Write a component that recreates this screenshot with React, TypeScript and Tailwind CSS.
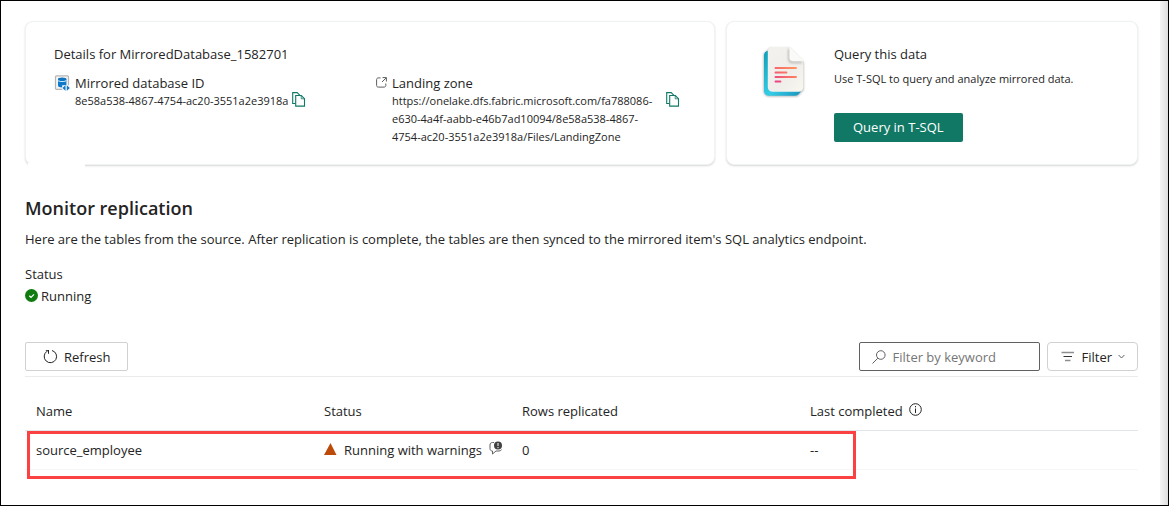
import type { ReactNode } from "react";

function DatabaseIcon() {
  return (
    <svg className="h-4 w-4 shrink-0" viewBox="0 0 16 16" aria-hidden="true">
      <rect x="1.500" y="0.8" width="13" height="13.6" rx="1" fill="#f4f4f4" stroke="#b5b5b5" strokeWidth="1.2" />
      <path d="M4 4v6.800c0 1 1.800 1.700 4.200 1.700s4.200-.7 4.200-1.700V4z" fill="#0f7ac8" />
      <ellipse cx="8.200" cy="4" rx="4.200" ry="1.500" fill="#1173bd" />
      <path d="M4.200 5.700c2 1 6 1 8 0" stroke="#d9f1ff" strokeWidth="1.200" fill="none" />
      <path d="M8.200 10.200H16v5.600H8.200z" fill="#f6f9fb" />
      <path d="M11.500 10.200v5.600L8.500 13zM12.800 10.200v5.600l3-2.800z" fill="#0f78c8" />
    </svg>
  );
}

function OpenIcon() {
  return (
    <svg className="h-[11px] w-[11px] shrink-0" viewBox="0 0 11 11" fill="none" stroke="#5f5f5f" aria-hidden="true">
      <path d="M4.500.9H2.2C1.300.9.6 1.600.6 2.500v6c0 .9.700 1.600 1.600 1.600h6c.9 0 1.600-.7 1.600-1.600V6.500" />
      <path d="M6.500.6h3.900v3.900M10.200.8 6 5" />
    </svg>
  );
}

function CopyIcon() {
  return (
    <svg className="h-[15px] w-[14px]" viewBox="0 0 14 15" fill="none" stroke="#117865" strokeWidth="1.1" aria-hidden="true">
      <path d="M3.500 11.500H.7V.6h4.500l2.500 2.500" />
      <path d="M3.700 3.500h5.600l3.200 3.200v7.400H3.700z" />
      <path d="M9.200 3.600v3.200h3.200" strokeWidth="0.8" />
    </svg>
  );
}

function CopyButton({ label }: { label: string }) {
  return (
    <button type="button" aria-label={label} className="mt-px h-[15px] w-[14px] shrink-0">
      <CopyIcon />
    </button>
  );
}

function DocumentArt() {
  return (
    <svg className="h-[56px] w-[46px] shrink-0" viewBox="0 0 46 56" aria-hidden="true">
      <defs>
        <linearGradient id="teal" x1="0" y1="0" x2="1" y2="1">
          <stop offset="0" stopColor="#0f9fb8" />
          <stop offset="0.55" stopColor="#35cde6" />
          <stop offset="1" stopColor="#1a93bd" />
        </linearGradient>
        <linearGradient id="paper" x1="0" y1="0" x2="1" y2="1">
          <stop offset="0" stopColor="#f3f2ef" />
          <stop offset="0.6" stopColor="#efeeea" />
          <stop offset="1" stopColor="#f8f7ef" />
        </linearGradient>
        <linearGradient id="rule" gradientUnits="userSpaceOnUse" x1="14" y1="40" x2="30" y2="22">
          <stop offset="0" stopColor="#e8368f" />
          <stop offset="0.5" stopColor="#f7686b" />
          <stop offset="1" stopColor="#ff8f62" />
        </linearGradient>
        <filter id="soft" x="-20%" y="-20%" width="140%" height="140%">
          <feGaussianBlur stdDeviation="1.1" />
        </filter>
      </defs>
      <path d="M9 4h19.500L42.500 18v28l-6 6.500H9c-4 0-6.500-2-6.500-6V10z" fill="#000" opacity="0.3" filter="url(#soft)" />
      <path d="M7 7h26v40h7c-1.500 3.200-3.500 4.800-6.500 4.800H8.500c-3.500 0-5.500-2-5.500-5.300V11.500C3 9 4.500 7 7 7z" fill="url(#teal)" />
      <path d="M11.500 3h17L42.300 16.500v26.200c0 3.300-1.800 5-5 5H12c-3.300 0-5.200-1.800-5.200-5V7.700C6.800 4.700 8.500 3 11.500 3z" fill="url(#paper)" />
      <path d="M28 5v9.500c0 2.600 1.300 3.800 3.800 3.800H41" fill="none" stroke="#8f8f8f" strokeWidth="1.800" opacity="0.6" filter="url(#soft)" />
      <path d="M28.500 3 42.300 16.500v.6H32c-2.400 0-3.500-1.100-3.500-3.500z" fill="#fafaf9" />
      <path d="M14.500 24h20.500M14.500 28.500h11M14.500 33h20.500M14.500 37.500h5" stroke="url(#rule)" strokeWidth="1.900" strokeLinecap="round" />
    </svg>
  );
}

function Card({ className, children }: { className: string; children: ReactNode }) {
  return (
    <section className={`rounded-lg border border-[#f0f3f3] bg-white shadow-[0_1px_2px_rgba(0,0,0,0.16)] ${className}`}>
      {children}
    </section>
  );
}

const headClass = "p-0 pl-[11px] text-left align-middle font-normal";
const cellClass = "p-0 pl-[11px] align-middle";

export default function App() {
  return (
    <main className="min-h-screen border border-black bg-white font-['Open_Sans','Noto_Sans',sans-serif] text-[13px] leading-5 text-[#242424]">
      <div className="flex min-h-[504px]">
        <div className="min-w-0 flex-1 pt-5 pr-[22px] pb-6 pl-6">
          <div className="grid grid-cols-[690fr_412fr] gap-[11px]">
            <div className="relative flex">
              <Card className="flex-1 px-7 pt-[22px] pb-[18px]">
                <h2>Details for MirroredDatabase_1582701</h2>
                <div className="mt-[9px] grid grid-cols-[322fr_310fr]">
                  <div className="flex items-start gap-[5px]">
                    <div className="pt-[2px]"><DatabaseIcon /></div>
                    <div>
                      <h3>Mirrored database ID</h3>
                      <div className="-mt-px flex items-start gap-1 text-[11px] leading-[18px]">
                        <p>8e58a538-4867-4754-ac20-3551a2e3918a</p>
                        <div className="-mt-px"><CopyButton label="Copy mirrored database ID" /></div>
                      </div>
                    </div>
                  </div>
                  <div className="flex items-start gap-[5px]">
                    <div className="pt-1"><OpenIcon /></div>
                    <div>
                      <h3>Landing zone</h3>
                      <div className="-mt-px flex items-start text-[11px] leading-[18px]">
                        <p className="w-[274px]">
                          https://onelake.dfs.fabric.microsoft.com/fa788086-
                          <br />
                          e630-4a4f-aabb-e46b7ad10094/8e58a538-4867-
                          <br />
                          4754-ac20-3551a2e3918a/Files/LandingZone
                        </p>
                        <div className="-mt-px"><CopyButton label="Copy landing zone" /></div>
                      </div>
                    </div>
                  </div>
                </div>
              </Card>
              <div className="absolute -bottom-1 left-[3px] h-[6px] w-[57px] bg-white" />
            </div>
            <Card className="flex gap-[27px] pt-[22px] pb-[22px] pl-[34px]">
              <DocumentArt />
              <div>
                <h2>Query this data</h2>
                <p className="mt-[5px] text-[11px] leading-5">Use T-SQL to query and analyze mirrored data.</p>
                <button type="button" className="mt-6 h-[29px] rounded-[2px] bg-[#117865] px-[19px] pb-[2px] text-white">
                  Query in T-SQL
                </button>
              </div>
            </Card>
          </div>

          <h1 className="mt-[31px] text-lg leading-6 font-semibold">Monitor replication</h1>
          <p className="mt-[9px]">
            Here are the tables from the source. After replication is complete, the tables are then synced to the
            mirrored item's SQL analytics endpoint.
          </p>
          <p className="mt-[15px]">Status</p>
          <p className="mt-[2px] flex items-center gap-[2px]">
            <svg className="h-[14px] w-[14px]" viewBox="0 0 14 14" aria-hidden="true">
              <circle cx="6.500" cy="6.500" r="6.500" fill="#107c10" />
              <path d="m4.300 6.700 1.700 1.600 3-3" fill="none" stroke="#fff" strokeWidth="1.200" />
            </svg>
            Running
          </p>

          <div className="mt-9 flex items-center gap-[7px] border-b border-[#ebebeb] pb-[5px]">
            <button type="button" className="mr-auto flex h-[29px] items-center gap-[6px] rounded-[2px] border border-[#d1d1d1] px-[17px]">
              <svg className="h-[15px] w-[15px]" viewBox="0 0 15 15" fill="none" stroke="#242424" aria-hidden="true">
                <path d="M9 1.500a6.200 6.200 0 1 1-5 .8" />
                <path d="M2.800 1.700h3.200M5.500 1.200v3.600" />
              </svg>
              Refresh
            </button>
            <label className="flex h-[29px] w-[181px] items-center gap-[6px] rounded-[2px] border border-[#616161] px-3">
              <svg className="h-[14px] w-[14px] shrink-0" viewBox="0 0 14 14" fill="none" stroke="#616161" aria-hidden="true">
                <circle cx="8.800" cy="5" r="4.300" />
                <path d="M5.800 8.200.500 13.500" />
              </svg>
              <input type="text" aria-label="Filter by keyword" placeholder="Filter by keyword" className="min-w-0 flex-1 outline-none placeholder:text-[#767676]" />
            </label>
            <button type="button" className="flex h-[29px] items-center gap-[6px] rounded-[4px] border border-[#d1d1d1] pr-3 pl-[13px]">
              <svg className="h-[13px] w-[14px]" viewBox="0 0 14 13" fill="none" aria-hidden="true">
                <path d="M.5 2.500h12.500M4 10.500h5.500" stroke="#8e8e8e" strokeWidth="1.600" />
                <path d="M2.500 6.500h8.500" stroke="#333" />
              </svg>
              Filter
              <svg className="h-[7px] w-[7px]" viewBox="0 0 7 7" fill="none" stroke="#616161" aria-hidden="true">
                <path d="m.6 2 2.900 3 2.900-3" />
              </svg>
            </button>
          </div>

          <div className="relative mt-4">
            <table className="w-full table-fixed border-collapse">
              <colgroup>
                <col className="w-[288px]" />
                <col className="w-[198px]" />
                <col className="w-[288px]" />
                <col />
              </colgroup>
              <thead>
                <tr className="h-[37px] border-b border-[#e3e6e8]">
                  <th scope="col" className={headClass}>Name</th>
                  <th scope="col" className={headClass}>Status</th>
                  <th scope="col" className={headClass}>Rows replicated</th>
                  <th scope="col" className={headClass}>
                    <span className="flex items-start gap-[6px]">
                      Last completed
                      <svg className="mt-[2px] h-[13px] w-[13px]" viewBox="0 0 13 13" fill="none" stroke="#242424" aria-hidden="true">
                        <circle cx="6.500" cy="6.500" r="5.800" />
                        <path d="M6.500 5.500V10M6.500 3v1.300" />
                      </svg>
                    </span>
                  </th>
                </tr>
              </thead>
              <tbody>
                <tr className="h-[39px] border-b border-[#f7f7f7]">
                  <td className={cellClass}>source_employee</td>
                  <td className={cellClass}>
                    <span className="flex items-center gap-[7px]">
                      <svg className="h-[13px] w-[13px] shrink-0" viewBox="0 0 13 13" fill="#bc4b09" aria-hidden="true">
                        <path d="M6.500 0 12.500 12H0z" />
                      </svg>
                      <span className="whitespace-nowrap">Running with warnings</span>
                      <svg className="mb-1 h-[14px] w-[14px] shrink-0" viewBox="0 0 14 14" fill="none" aria-hidden="true">
                        <path d="M5 1.500H3.500C1.800 1.500 1 2.500 1 4v3.500C1 9 1.800 10 3.500 10v3L7 10h3c1.300 0 2-.5 2.500-1.500" stroke="#616161" />
                        <circle cx="9" cy="4.500" r="4" fill="#424242" />
                        <path d="M9 2v3M9 6v1.200" stroke="#fff" />
                      </svg>
                    </span>
                  </td>
                  <td className={cellClass}>0</td>
                  <td className={cellClass}>--</td>
                </tr>
              </tbody>
            </table>
            <div className="pointer-events-none absolute top-[38px] left-[2px] h-12 w-[829px] border-[3px] border-[#fb4141]" />
          </div>
        </div>
        <div className="w-2 shrink-0 bg-linear-to-r from-[#f5f5f5] to-[#dedede]" />
      </div>
    </main>
  );
}
